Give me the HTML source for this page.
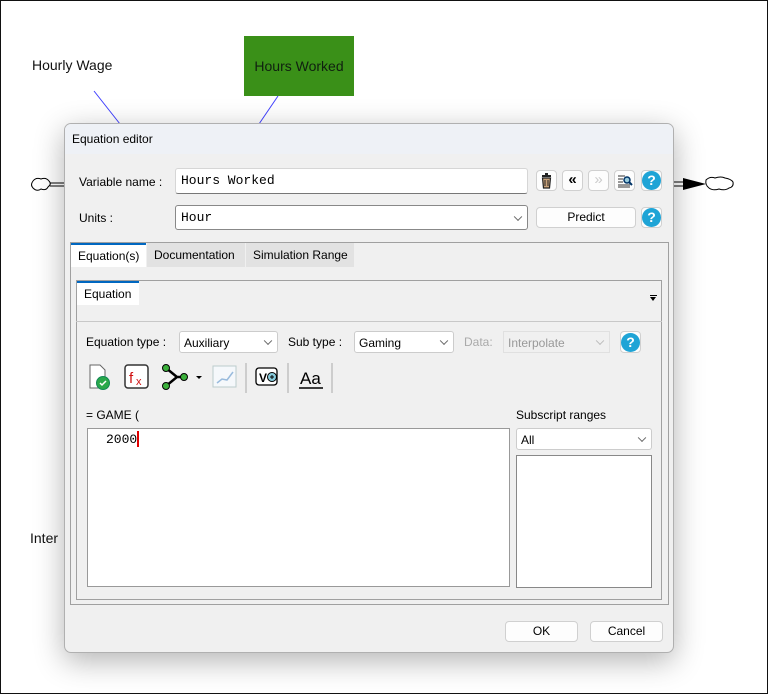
<!DOCTYPE html>
<html><head><style>
*{box-sizing:border-box;margin:0;padding:0}
body{width:769px;height:695px;background:#fff;position:relative;overflow:hidden;font-family:"Liberation Sans",sans-serif;font-size:12px;color:#000}
.a{position:absolute}
.frame{left:0;top:0;width:768px;height:694px;border:1.5px solid #111}
.t{white-space:nowrap}
.inp{background:#fff;border:1px solid #c8c8c8;border-bottom:1px solid #888;border-radius:3px}
.btn{background:#fdfdfd;border:1px solid #d0d0d0;border-radius:4px;text-align:center}
.mono{font-family:"Liberation Mono",monospace;font-size:13px}
.chev{position:absolute;right:6px;top:50%;width:6px;height:6px;border-right:1px solid #666;border-bottom:1px solid #666;transform:translateY(-70%) rotate(45deg)}
.help{width:19px;height:19px;border-radius:50%;background:#1fa4d6;color:#fff;font-weight:bold;font-size:14px;text-align:center;line-height:19px;position:absolute;left:1px;top:1px}
</style></head><body>
<div class="a frame"></div>
<div class="a t" style="left:32px;top:57px;font-size:14px;color:#111">Hourly Wage</div>
<div class="a" style="left:244px;top:36px;width:110px;height:60px;background:#3a9018;color:#102010;font-size:14px;line-height:60px;text-align:center">Hours Worked</div>
<svg class="a" style="left:0;top:0" width="769" height="695">
<line x1="94" y1="91" x2="120" y2="124" stroke="#4040ff"/>
<line x1="278" y1="96" x2="259" y2="124" stroke="#4040ff"/>
<path d="M33 181 q3-4 8-2 q5-2 8 2 q3 3 -1 6 q-2 4-7 2 q-4 3-8-1 q-3-3 0-7z" fill="#fff" stroke="#000"/>
<line x1="50" y1="183" x2="64" y2="183" stroke="#000"/><line x1="50" y1="186" x2="64" y2="186" stroke="#000"/>
<line x1="674" y1="182" x2="684" y2="182" stroke="#000"/><line x1="674" y1="186" x2="684" y2="186" stroke="#000"/>
<path d="M683 178 L706 184 L683 190z" fill="#000"/>
<path d="M706 180 q4-4 9-2 q6-2 10 0 q6 1 8 4 q1 5-4 6 q-4 3-10 1 q-6 2-10-1 q-4-3-3-8z" fill="#fff" stroke="#000"/>
<text x="30" y="543" font-family="Liberation Sans" font-size="14" fill="#111">Inter</text>
</svg>
<div class="a" style="left:64px;top:123px;width:610px;height:530px;background:#f0f0f0;border:1px solid #b0b0b0;border-radius:7px;box-shadow:0 8px 30px rgba(0,0,0,.3);overflow:hidden">
 <div class="a" style="left:0;top:0;width:610px;height:30px;background:#eef1f6"></div>
 <div class="a t" style="left:7px;top:8px;font-size:12px">Equation editor</div>
</div>
<div class="a t" style="left:79px;top:175px">Variable name :</div>
<div class="a inp mono" style="left:175px;top:168px;width:353px;height:26px;padding:4px 5px;border-color:#d6d6d6;border-bottom-color:#777">Hours Worked</div>
<div class="a btn" style="left:536px;top:170px;width:21px;height:21px">
 <svg width="19" height="19"><rect x="5" y="4" width="9" height="2" fill="#222"/><rect x="8" y="2" width="3" height="2" fill="#222"/><path d="M5.5 7h8l-1 10h-6z" fill="#c9a27a" stroke="#222" stroke-width="1.2"/><path d="M8 9v6M11 9v6" stroke="#222"/></svg></div>
<div class="a btn" style="left:562px;top:170px;width:21px;height:21px;font-size:15px;line-height:18px;font-weight:bold">«</div>
<div class="a btn" style="left:588px;top:170px;width:21px;height:21px;font-size:15px;line-height:18px;color:#ccc">»</div>
<div class="a btn" style="left:614px;top:170px;width:21px;height:21px">
 <svg width="19" height="19"><path d="M3 5h7M3 8h5M3 11h5M3 14h12M3 16h12" stroke="#333"/><circle cx="12" cy="9" r="3" fill="#9cd" stroke="#036" stroke-width="1.5"/><line x1="14" y1="11" x2="17" y2="14" stroke="#036" stroke-width="2"/></svg></div>
<div class="a btn" style="left:641px;top:170px;width:21px;height:21px"><div class="help" style="left:0;top:0">?</div></div>
<div class="a t" style="left:79px;top:211px">Units :</div>
<div class="a inp mono" style="left:175px;top:205px;width:353px;height:25px;padding:4px 5px;border-color:#888">Hour<span class="chev"></span></div>
<div class="a btn" style="left:536px;top:207px;width:100px;height:21px;line-height:19px">Predict</div>
<div class="a btn" style="left:641px;top:207px;width:21px;height:21px"><div class="help" style="left:0;top:0">?</div></div>
<div class="a" style="left:70px;top:242px;width:599px;height:363px;border:1px solid #a0a0a0"></div>
<div class="a t" style="left:71px;top:243px;width:75px;height:24px;background:#fff;border-top:2px solid #0067c0;padding:4px 0 0 7px">Equation(s)</div>
<div class="a t" style="left:147px;top:243px;width:98px;height:24px;background:#e2e2e2;padding:5px 0 0 7px">Documentation</div>
<div class="a t" style="left:246px;top:243px;width:108px;height:24px;background:#e2e2e2;padding:5px 0 0 7px">Simulation Range</div>
<div class="a" style="left:76px;top:280px;width:586px;height:320px;border:1px solid #a0a0a0"></div>
<div class="a t" style="left:77px;top:281px;width:62px;height:24px;background:#fff;border-top:2px solid #0067c0;padding:4px 0 0 7px">Equation</div>
<div class="a" style="left:650px;top:297px;width:0;height:0;border-left:3.5px solid transparent;border-right:3.5px solid transparent;border-top:4px solid #000"></div>
<div class="a" style="left:650px;top:295px;width:7px;height:1px;background:#000"></div>
<div class="a" style="left:76px;top:321px;width:586px;height:1px;background:#c8c8c8"></div>
<div class="a t" style="left:86px;top:335px">Equation type :</div>
<div class="a inp" style="left:179px;top:331px;width:99px;height:22px;padding:4px;border-color:#ccc">Auxiliary<span class="chev"></span></div>
<div class="a t" style="left:288px;top:335px">Sub type :</div>
<div class="a inp" style="left:354px;top:331px;width:100px;height:22px;padding:4px;border-color:#ccc">Gaming<span class="chev"></span></div>
<div class="a t" style="left:464px;top:335px;color:#aaa">Data:</div>
<div class="a" style="left:503px;top:331px;width:107px;height:22px;padding:4px;color:#999;background:#f0f0f0;border:1px solid #e0e0e0">Interpolate<span class="chev" style="border-color:#bbb"></span></div>
<div class="a btn" style="left:620px;top:331px;width:21px;height:22px"><div class="help" style="left:0;top:1px">?</div></div>
<svg class="a" style="left:80px;top:355px" width="270" height="45">
<path d="M10 10h10l5 5v18h-15z" fill="#fff" stroke="#666"/>
<circle cx="23" cy="28" r="6.5" fill="#2aa84a" stroke="#185"/><path d="M20 28l2 2 4-4" stroke="#fff" fill="none" stroke-width="1.5"/>
<rect x="45" y="10" width="23" height="23" rx="3" fill="#fff" stroke="#333" stroke-width="1.5"/>
<text x="49" y="28" font-family="Liberation Sans" font-size="15" fill="#d01010">f</text><text x="56" y="30" font-family="Liberation Sans" font-size="11" fill="#d01010">x</text>
<path d="M86 13 L97 22 L86 31 M97 22 H104" stroke="#000" stroke-width="2.5" fill="none"/>
<circle cx="86" cy="13" r="3.5" fill="#3bb03b" stroke="#000"/><circle cx="86" cy="31" r="3.5" fill="#3bb03b" stroke="#000"/><circle cx="104" cy="22" r="3.5" fill="#3bb03b" stroke="#000"/>
<path d="M116 21h6l-3 3z" fill="#000"/>
<rect x="133" y="11" width="23" height="21" fill="#f5f8fb" stroke="#bcc"/><path d="M137 28l5-4 5 1 6-8" stroke="#9bd" fill="none" stroke-width="1.5"/>
<line x1="166" y1="8" x2="166" y2="38" stroke="#aaa"/>
<rect x="176" y="13" width="21" height="17" rx="3" fill="#fff" stroke="#000" stroke-width="1.3"/>
<text x="179" y="27" font-family="Liberation Sans" font-size="12" font-weight="bold">V</text>
<circle cx="192" cy="22" r="4.5" fill="#8cd" stroke="#000"/><path d="M190 22h4M192 20v4" stroke="#000"/>
<line x1="208" y1="8" x2="208" y2="38" stroke="#aaa"/>
<text x="220" y="29" font-family="Liberation Sans" font-size="17">Aa</text><line x1="219" y1="33" x2="243" y2="33" stroke="#000" stroke-width="1.5"/>
<line x1="252" y1="8" x2="252" y2="38" stroke="#aaa"/>
</svg>
<div class="a t" style="left:86px;top:408px">= GAME (</div>
<div class="a t" style="left:516px;top:408px">Subscript ranges</div>
<div class="a" style="left:87px;top:428px;width:423px;height:159px;background:#fff;border:1px solid #999"></div>
<div class="a mono" style="left:106px;top:432px">2000</div>
<div class="a" style="left:137px;top:431px;width:2px;height:16px;background:#e00000"></div>
<div class="a inp" style="left:516px;top:428px;width:136px;height:22px;padding:4px 4px;border-color:#ccc">All<span class="chev"></span></div>
<div class="a" style="left:516px;top:455px;width:136px;height:133px;background:#fff;border:1px solid #888"></div>
<div class="a btn" style="left:505px;top:621px;width:73px;height:21px;line-height:19px">OK</div>
<div class="a btn" style="left:590px;top:621px;width:73px;height:21px;line-height:19px">Cancel</div>
</body></html>
